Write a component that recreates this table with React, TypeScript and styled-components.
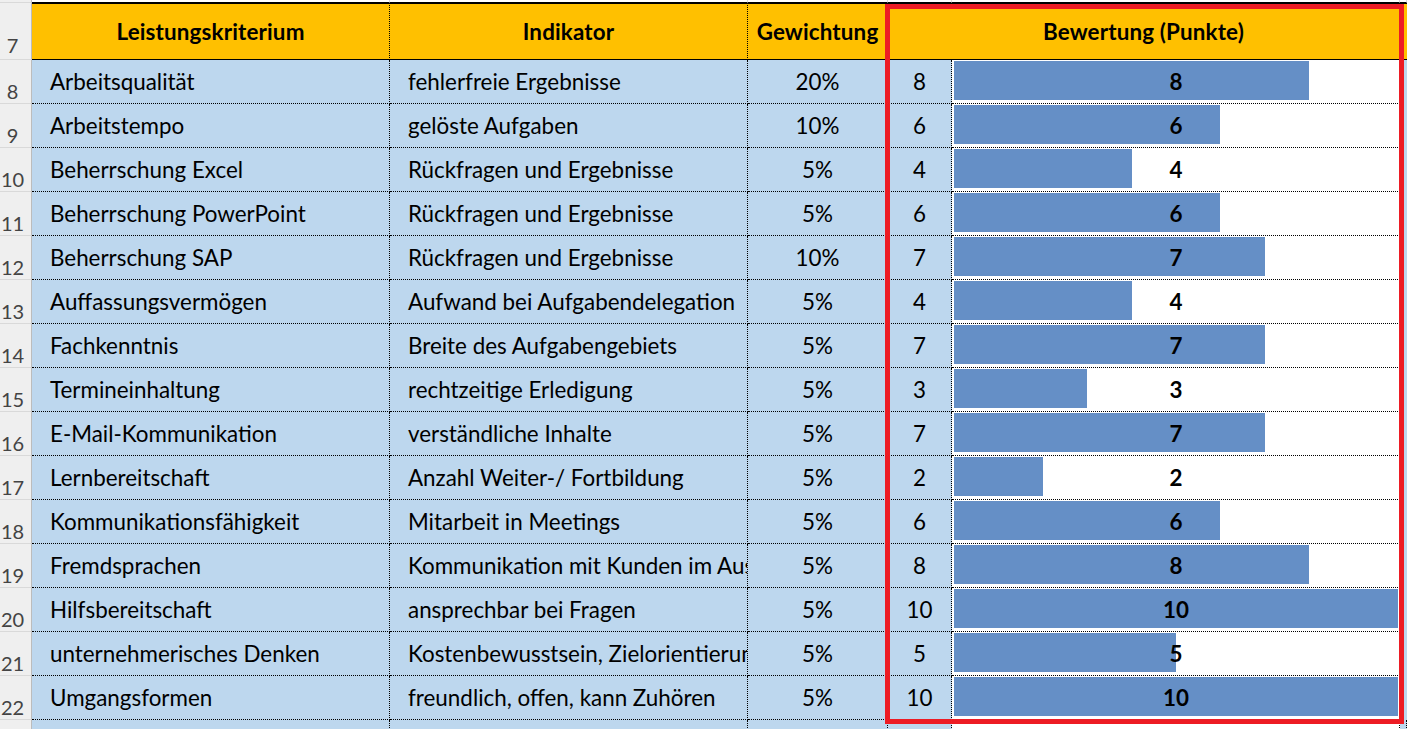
import React from "react";
import styled, { createGlobalStyle, css } from "styled-components";

const GlobalStyle = createGlobalStyle`
  html, body { margin: 0; padding: 0; background: #ffffff; }
  body { font-family: Lato, "Open Sans", "Liberation Sans", sans-serif; overflow: hidden; }
`;

const COLS = "32px 358px 358px 140px 64px 448px 1fr";
const FONT_SIZE = 22.4;
const BAR_MAX = 444;

const Sheet = styled.div`
  position: relative;
  width: 1407px;
  height: 729px;
  overflow: hidden;
  display: flex;
  flex-direction: column;
`;

const Row = styled.div<{ $h: number }>`
  display: grid;
  grid-template-columns: ${COLS};
  height: ${(p) => p.$h}px;
  flex: none;
`;

const RowHead = styled.div<{ $pad?: number }>`
  background: #efefef;
  border-right: 1px solid #bcbcbc;
  border-bottom: 1px solid #d9d9d9;
  color: #444444;
  font-size: 20px;
  display: flex;
  align-items: flex-end;
  justify-content: center;
  padding-right: 6px;
  padding-bottom: ${(p) => p.$pad ?? 2}px;
  line-height: 1;
  box-sizing: border-box;
  overflow: hidden;
`;

const BlankCell = styled.div`
  background: #ffffff;
  border-right: 1px solid #d9d9d9;
  border-bottom: 1px solid #000000;
  box-sizing: border-box;
`;

const HeadCell = styled.div<{ $span?: number; $last?: boolean }>`
  background: #ffc000;
  border-top: 1px solid #000000;
  border-bottom: 1px solid #000000;
  border-right: ${(p) => (p.$last ? "none" : "1px dotted #000000")};
  grid-column: span ${(p) => p.$span ?? 1};
  font-weight: 700;
  font-size: ${FONT_SIZE}px;
  letter-spacing: 0.15px;
  color: #000000;
  display: flex;
  align-items: center;
  justify-content: center;
  box-sizing: border-box;
  white-space: nowrap;
  overflow: hidden;
`;

const Cell = styled.div<{ $align?: "left" | "center"; $white?: boolean; $noBorder?: boolean }>`
  background: ${(p) => (p.$white ? "#ffffff" : "#bdd7ee")};
  border-right: ${(p) => (p.$noBorder ? "none" : "1px dotted #000000")};
  border-bottom: ${(p) => (p.$noBorder ? "none" : "1px dotted #000000")};
  font-size: ${FONT_SIZE}px;
  color: #000000;
  display: flex;
  align-items: center;
  box-sizing: border-box;
  white-space: nowrap;
  overflow: hidden;
  ${(p) =>
    p.$align === "center"
      ? css`
          justify-content: center;
        `
      : css`
          justify-content: flex-start;
          padding-left: 18px;
        `}
`;

const BarCell = styled.div`
  position: relative;
  background: #ffffff;
  border-right: 1px solid #d9d9d9;
  border-bottom: 1px dotted #000000;
  box-sizing: border-box;
  display: flex;
  align-items: center;
  justify-content: center;
  overflow: hidden;
`;

const Bar = styled.div`
  position: absolute;
  left: 2px;
  top: 1px;
  height: 39px;
  background: #658fc6;
`;

const BarLabel = styled.span`
  position: relative;
  font-size: ${FONT_SIZE}px;
  font-weight: 700;
  color: #000000;
  padding-left: 1px;
`;

const TailCell = styled.div<{ $white?: boolean }>`
  background: ${(p) => (p.$white ? "#ffffff" : "#bdd7ee")};
  border-right: 1px dotted #000000;
  box-sizing: border-box;
`;

const Highlight = styled.div`
  position: absolute;
  left: 885px;
  top: 4px;
  width: 519px;
  height: 720px;
  border: 5px solid #ed1c24;
  box-sizing: border-box;
  pointer-events: none;
`;

type Item = { k: string; ind: string; w: string; p: number };

const items: Item[] = [
  { k: "Arbeitsqualität", ind: "fehlerfreie Ergebnisse", w: "20%", p: 8 },
  { k: "Arbeitstempo", ind: "gelöste Aufgaben", w: "10%", p: 6 },
  { k: "Beherrschung Excel", ind: "Rückfragen und Ergebnisse", w: "5%", p: 4 },
  { k: "Beherrschung PowerPoint", ind: "Rückfragen und Ergebnisse", w: "5%", p: 6 },
  { k: "Beherrschung SAP", ind: "Rückfragen und Ergebnisse", w: "10%", p: 7 },
  { k: "Auffassungsvermögen", ind: "Aufwand bei Aufgabendelegation", w: "5%", p: 4 },
  { k: "Fachkenntnis", ind: "Breite des Aufgabengebiets", w: "5%", p: 7 },
  { k: "Termineinhaltung", ind: "rechtzeitige Erledigung", w: "5%", p: 3 },
  { k: "E-Mail-Kommunikation", ind: "verständliche Inhalte", w: "5%", p: 7 },
  { k: "Lernbereitschaft", ind: "Anzahl Weiter-/ Fortbildung", w: "5%", p: 2 },
  { k: "Kommunikationsfähigkeit", ind: "Mitarbeit in Meetings", w: "5%", p: 6 },
  { k: "Fremdsprachen", ind: "Kommunikation mit Kunden im Ausland", w: "5%", p: 8 },
  { k: "Hilfsbereitschaft", ind: "ansprechbar bei Fragen", w: "5%", p: 10 },
  { k: "unternehmerisches Denken", ind: "Kostenbewusstsein, Zielorientierung", w: "5%", p: 5 },
  { k: "Umgangsformen", ind: "freundlich, offen, kann Zuhören", w: "5%", p: 10 },
];

export default function App() {
  return (
    <>
      <GlobalStyle />
      <Sheet>
        <Row $h={3}>
          <RowHead />
          <BlankCell />
          <BlankCell />
          <BlankCell />
          <BlankCell />
          <BlankCell />
          <BlankCell />
        </Row>
        <Row $h={57}>
          <RowHead $pad={4}>7</RowHead>
          <HeadCell>Leistungskriterium</HeadCell>
          <HeadCell>Indikator</HeadCell>
          <HeadCell>Gewichtung</HeadCell>
          <HeadCell $span={2}>Bewertung (Punkte)</HeadCell>
          <HeadCell $last />
        </Row>
        {items.map((it, i) => (
          <Row $h={44} key={it.k}>
            <RowHead>{i + 8}</RowHead>
            <Cell>{it.k}</Cell>
            <Cell>{it.ind}</Cell>
            <Cell $align="center">{it.w}</Cell>
            <Cell $align="center">{it.p}</Cell>
            <BarCell>
              <Bar style={{ width: `${(it.p / 10) * BAR_MAX}px` }} />
              <BarLabel>{it.p}</BarLabel>
            </BarCell>
            <Cell $noBorder />
          </Row>
        ))}
        <Row $h={20}>
          <RowHead />
          <TailCell />
          <TailCell />
          <TailCell />
          <TailCell />
          <TailCell $white />
          <TailCell />
        </Row>
        <Highlight />
      </Sheet>
    </>
  );
}
